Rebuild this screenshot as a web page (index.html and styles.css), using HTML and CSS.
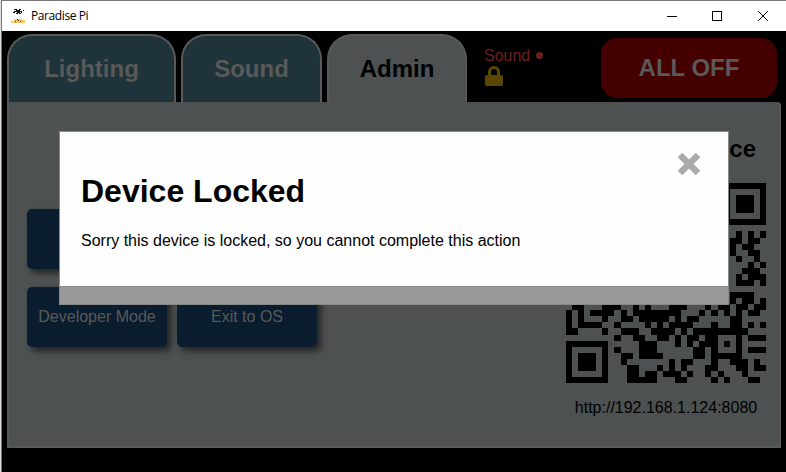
FILE: index.html
```html
<!DOCTYPE html>
<html lang="en">
<head>
<meta charset="utf-8">
<title>Paradise Pi</title>
<link rel="stylesheet" href="styles.css">
</head>
<body>
<div class="window">
  <header class="titlebar">
    <svg class="app-icon" width="15" height="16" viewBox="0 0 15 16" shape-rendering="crispEdges">
      <path fill="#111" d="M3 1h3v1H3zM8 1h2v1H8zM12 2h1v1h-1zM5 2h4v1H5zM3 3h8v1H3zM2 4h2v1H2zM6 4h3v1H6zM10 4h1v1h-1zM5 5h2v1H5zM8 5h2v1H8z"/>
      <path fill="#fdc65f" d="M3 11h8v1h3v3H0v-2h3z"/>
      <path fill="#333" d="M4 13h1v1H4zM7 12h1v1H7zM9 13h1v1H9zM6 11h1v1H6z"/>
    </svg>
    <span class="title">Paradise Pi</span>
    <svg class="controls" width="102" height="12" viewBox="0 0 102 12" fill="none" stroke="#000">
      <path d="M0 6.500h10M45.500 1.500h9v9h-9z" shape-rendering="crispEdges"/>
      <path d="M91.300 1.300l9.400 9.400M100.700 1.300l-9.400 9.400"/>
    </svg>
  </header>
  <div class="app">
    <nav class="topbar">
      <div class="tab lighting">Lighting</div>
      <div class="tab sound">Sound</div>
      <div class="tab admin">Admin</div>
      <div class="status">
        <div class="fault">Sound <i class="dot"></i></div>
        <svg class="lock" width="18" height="20" viewBox="0 0 18 20">
          <path d="M4.500 10V6a4.500 4.500 0 0 1 9 0v4" fill="none" stroke="#5c4700" stroke-width="3"/>
          <rect y="9" width="18" height="11" rx="2" fill="#5c4700"/>
        </svg>
      </div>
      <div class="all-off">ALL OFF</div>
    </nav>
    <main class="panel">
      <div class="buttons">
        <div class="button"></div><div class="button"></div>
        <div class="button">Developer Mode</div><div class="button">Exit to OS</div>
      </div>
      <section class="connect">
        <h2>Connect Device</h2>
        <svg class="qr" width="200" height="200" viewBox="0 0 33 33" shape-rendering="crispEdges"><path id="qr"/></svg>
        <div class="url">http://192.168.1.124:8080</div>
      </section>
    </main>
  </div>
</div>
<div class="modal">
  <div class="modal-body">
    <svg class="close" width="24" height="24" viewBox="0 0 24 24"><path d="M3 3l18 18M21 3L3 21" stroke="#aaa" stroke-width="6.500"/></svg>
    <h1>Device Locked</h1>
    <p>Sorry this device is locked, so you cannot complete this action</p>
  </div>
  <div class="modal-footer"></div>
</div>
<script src="qr.js"></script>
</body>
</html>
```
FILE: styles.css
```css
* { box-sizing: border-box; }
body { margin: 0; width: 786px; height: 472px; overflow: hidden; background: #000; font: 16px "Liberation Sans", Arial, sans-serif; }
.window { height: 472px; border-left: 1px solid #ddd; box-shadow: inset 1px 0 #777; }
.titlebar { height: 31px; background: #fff; border-top: 1px solid #777; border-left: 1px solid #777; display: flex; align-items: center; padding-left: 9px; }
.title { font: 12px "Open Sans", sans-serif; letter-spacing: -0.4px; margin: -2px 0 0 5px; color: #000; }
.controls { margin-left: auto; margin-right: 17px; }
.app { padding: 3px 5px 0 6px; }
.topbar { height: 68px; display: flex; }
.tab { height: 68px; border: 2px solid #595959; border-bottom: 0; border-radius: 25px 25px 0 0; background: #1e343a; color: #595959; font-weight: bold; font-size: 24px; text-align: center; line-height: 66px; margin-right: 5px; }
.lighting { width: 169px; }
.sound { width: 141px; }
.admin { width: 140px; background: #4d5151; color: #000; }
.status { width: 129px; padding: 10px 0 0 12px; color: #6a2020; line-height: 19px; }
.fault { height: 22px; display: flex; align-items: center; gap: 6px; }
.dot { width: 7px; height: 7px; border-radius: 50%; background: #6a2020; }
.lock { display: block; margin-left: 1px; }
.all-off { width: 176px; height: 60px; margin-top: 4px; border-radius: 16px; background: #400; color: #595959; font-weight: bold; font-size: 24px; text-align: center; line-height: 60px; }
.panel { width: 774px; height: 346px; border: 2px solid #595959; border-top: 0; border-radius: 0 4px 0 0; background: #4d5151; display: flex; justify-content: space-between; padding: 33px 13px 0 18px; }
.buttons { padding-top: 74px; display: grid; grid-template-columns: 140px 140px; grid-auto-rows: 60px; align-content: start; gap: 18px 10px; }
.button { border-radius: 5px; background: #091d2e; color: #595959; text-align: center; line-height: 60px; box-shadow: 4px 4px 6px #242424; }
.connect { width: 200px; text-align: center; color: #000; }
h2 { margin: 0 0 20px; font-size: 24px; line-height: 28px; white-space: nowrap; }
.qr { display: block; }
.url { margin-top: 16px; line-height: 18px; }
.modal { position: absolute; left: 59px; top: 131px; width: 670px; height: 174px; border: 1px solid #888; background: #fefefe; }
.modal-body { height: 154px; padding: 41px 21px 0; position: relative; }
h1 { margin: 0; font-size: 32px; line-height: 36px; }
p { margin: 23px 0 0; line-height: 18px; }
.close { position: absolute; right: 27px; top: 20px; }
.modal-footer { height: 18px; background: #999; border-top: 1px solid #888; }
```
FILE: qr.js
```js
// Dark columns of each row of the code.
const left = [0, 1, 2, 3, 4, 5, 6];
const right = [26, 27, 28, 29, 30, 31, 32];
const rows = [
  [...left, ...right],
  [0, 6, 26, 32],
  [0, 2, 3, 4, 6, 26, 28, 29, 30, 32],
  [0, 2, 3, 4, 6, 26, 28, 29, 30, 32],
  [0, 2, 3, 4, 6, 26, 28, 29, 30, 32],
  [0, 6, 26, 32],
  [...left, ...right],
  [],
  [28, 30, 32],
  [27, 28, 30, 31],
  [27, 29, 30],
  [27, 30, 31],
  [28, 31],
  [30, 32],
  [29, 30, 31],
  [28, 30, 31, 32],
  [28, 29, 30, 32],
  [],
  [27, 28, 29, 30],
  [27, 29, 30, 32],
  [1, 2, 6, 7, 8, 11, 13, 17, 18, 19, 23, 25, 26, 28, 29, 31, 32],
  [0, 2, 4, 5, 6, 7, 9, 11, 12, 13, 14, 15, 16, 17, 18, 22, 24, 26, 28, 30, 31],
  [0, 2, 6, 9, 10, 12, 13, 14, 15, 16, 18, 20, 21, 27, 28],
  [0, 2, 3, 4, 5, 8, 13, 15, 17, 18, 19, 20, 24, 27, 28, 30, 32],
  [0, 1, 6, 9, 10, 11, 14, 15, 16, 17, 19, 21, 22, 23, 24, 25, 26, 27, 28, 29],
  [8, 11, 12, 15, 16, 18, 20, 21, 23, 24, 28, 30, 31, 32],
  [...left, 12, 13, 14, 18, 20, 22, 23, 24, 26, 28],
  [0, 6, 8, 12, 13, 14, 21, 22, 24, 28, 30, 31, 32],
  [0, 2, 3, 4, 6, 9, 10, 12, 13, 14, 15, 21, 22, 24, 25, 26, 27, 28],
  [0, 2, 3, 4, 6, 9, 17, 19, 20, 24, 27, 28, 29, 31],
  [0, 2, 3, 4, 6, 10, 11, 15, 17, 19, 23, 24, 28, 29, 31, 32],
  [0, 6, 10, 11, 13, 14, 16, 17, 18, 20, 23, 25, 29],
  [...left, 10, 11, 12, 13, 14, 18, 19, 24, 26, 30, 31]
];
let d = "";
rows.forEach((row, y) => row.forEach(x => { d += `M${x} ${y}h1v1h-1z`; }));
document.getElementById("qr").setAttribute("d", d);
```
